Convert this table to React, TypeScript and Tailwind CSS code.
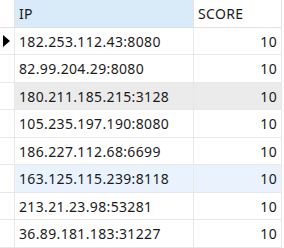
import React from "react";

type Row = { ip: string; score: number; tone?: "gray" | "blue"; current?: boolean };

const rows: Row[] = [
  { ip: "182.253.112.43:8080", score: 10, current: true },
  { ip: "82.99.204.29:8080", score: 10 },
  { ip: "180.211.185.215:3128", score: 10, tone: "gray" },
  { ip: "105.235.197.190:8080", score: 10 },
  { ip: "186.227.112.68:6699", score: 10 },
  { ip: "163.125.115.239:8118", score: 10, tone: "blue" },
  { ip: "213.21.23.98:53281", score: 10 },
  { ip: "36.89.181.183:31227", score: 10 },
];

export default function App() {
  return (
    <div className="w-[284px] h-[248px] bg-white overflow-hidden text-[14px] tracking-[0.35px] text-[#1b1b1b] font-['Noto_Sans',sans-serif]">
      <div className="grid grid-cols-[15px_179px_88px] w-[282px]">
        {/* header */}
        <div className="h-[28px] border-r border-b border-[#e3e3e3] bg-white" />
        <div className="h-[28px] border-r border-b border-[#e3e3e3] bg-[#d9eaf8] flex items-center pl-[4px]">IP</div>
        <div className="h-[28px] border-r border-b border-[#e3e3e3] bg-white flex items-center pl-[4px]">SCORE</div>

        {rows.map((r, i) => {
          const bg = r.tone === "gray" ? "bg-[#ebebeb]" : r.tone === "blue" ? "bg-[#eaf3fd]" : "bg-white";
          const h = i % 2 === 0 ? "h-[27px]" : "h-[28px]";
          return (
            <React.Fragment key={r.ip}>
              <div className={`${h} border-r border-b border-[#e8e8e8] bg-white flex items-center pl-[3px]`}>
                {r.current && (
                  <svg width="7" height="12" viewBox="0 0 7 12">
                    <path d="M0 0 L7 6 L0 12 Z" fill="#000" />
                  </svg>
                )}
              </div>
              <div className={`${h} border-r border-b border-[#e8e8e8] ${bg} flex items-center pl-[4px]`}>{r.ip}</div>
              <div className={`${h} border-r border-b border-[#e8e8e8] ${bg} flex items-center justify-end pr-[4px]`}>{r.score}</div>
            </React.Fragment>
          );
        })}
      </div>
    </div>
  );
}
